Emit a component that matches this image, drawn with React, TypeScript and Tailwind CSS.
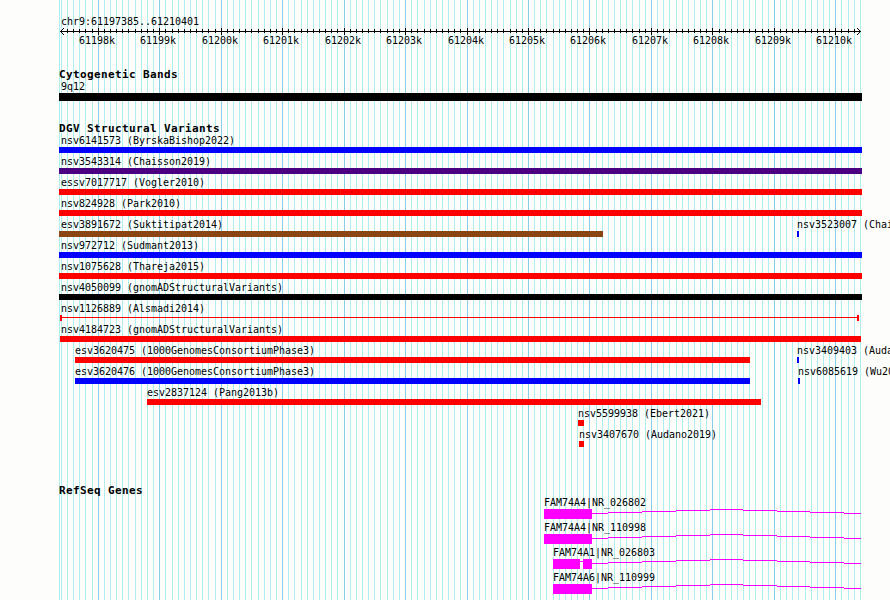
interface Feature {
  name: string;
  start: number;
  end: number;
  color: string;
  labelX?: number;
  thin?: boolean;
}

interface Gene {
  name: string;
  start: number;
  exons: [number, number][];
}

const BLUE = 'bg-[#0000ff]';
const RED = 'bg-[#ff0000]';
const PURPLE = 'bg-[#4b0082]';
const BROWN = 'bg-[#8b4513]';
const BLACK = 'bg-black';

// Pixel position of 61198k and the width of a 100 bp step
const ORIGIN = 98.25;
const STEP = 6.14628;

const gridLines = Array.from({ length: 131 }, (_, i) => {
  const k = i - 6;
  return { x: Math.floor(ORIGIN + k * STEP), major: k % 10 === 0, k };
});

const majorLines = gridLines.filter((line) => line.major);

const variantRows: Feature[][] = [
  [{ name: 'nsv6141573 (ByrskaBishop2022)', start: 59, end: 862, color: BLUE, labelX: 60 }],
  [{ name: 'nsv3543314 (Chaisson2019)', start: 59, end: 862, color: PURPLE, labelX: 60 }],
  [{ name: 'essv7017717 (Vogler2010)', start: 59, end: 862, color: RED, labelX: 60 }],
  [{ name: 'nsv824928 (Park2010)', start: 59, end: 862, color: RED, labelX: 60 }],
  [
    { name: 'esv3891672 (Suktitipat2014)', start: 59, end: 603, color: BROWN, labelX: 60 },
    { name: 'nsv3523007 (Chaisson2019)', start: 797, end: 799, color: BLUE, labelX: 796 },
  ],
  [{ name: 'nsv972712 (Sudmant2013)', start: 59, end: 862, color: BLUE, labelX: 60 }],
  [{ name: 'nsv1075628 (Thareja2015)', start: 59, end: 862, color: RED, labelX: 60 }],
  [{ name: 'nsv4050099 (gnomADStructuralVariants)', start: 59, end: 862, color: BLACK, labelX: 60 }],
  [{ name: 'nsv1126889 (Alsmadi2014)', start: 60, end: 859, color: RED, thin: true }],
  [{ name: 'nsv4184723 (gnomADStructuralVariants)', start: 60, end: 861, color: RED }],
  [
    { name: 'esv3620475 (1000GenomesConsortiumPhase3)', start: 75, end: 750, color: RED, labelX: 74 },
    { name: 'nsv3409403 (Audano2019)', start: 797, end: 799, color: BLUE, labelX: 796 },
  ],
  [
    { name: 'esv3620476 (1000GenomesConsortiumPhase3)', start: 75, end: 750, color: BLUE, labelX: 74 },
    { name: 'nsv6085619 (Wu2021)', start: 798, end: 800, color: BLUE, labelX: 797 },
  ],
  [{ name: 'esv2837124 (Pang2013b)', start: 147, end: 761, color: RED, labelX: 146 }],
  [{ name: 'nsv5599938 (Ebert2021)', start: 578, end: 584, color: RED, labelX: 577 }],
  [{ name: 'nsv3407670 (Audano2019)', start: 579, end: 584, color: RED, labelX: 578 }],
];

const genes: Gene[] = [
  { name: 'FAM74A4|NR_026802', start: 543, exons: [[544, 592]] },
  { name: 'FAM74A4|NR_110998', start: 543, exons: [[544, 592]] },
  { name: 'FAM74A1|NR_026803', start: 552, exons: [[553, 580], [583, 592]] },
  { name: 'FAM74A6|NR_110999', start: 552, exons: [[553, 592]] },
];

// Intron line, drawn as flat one pixel runs: [from, to, y]
const intron = [
  [592, 608, 4],
  [608, 642, 3],
  [642, 676, 2],
  [676, 710, 1],
  [710, 743, 0],
  [743, 777, 1],
  [777, 810, 2],
  [810, 844, 3],
  [844, 861, 4],
];

function Grid() {
  return (
    <svg className="absolute inset-0" width="890" height="600" shapeRendering="crispEdges">
      <rect x="59" y="0" width="1" height="600" fill="#afeeee" />
      {gridLines
        .filter((line) => line.x < 862)
        .map((line) => (
          <rect
            key={line.k}
            x={line.x}
            y="0"
            width="1"
            height="600"
            fill={line.major ? '#87ceeb' : '#afeeee'}
          />
        ))}
    </svg>
  );
}

function Ruler() {
  return (
    <div className="relative h-[40px]">
      <svg className="block" width="890" height="9" shapeRendering="crispEdges">
        <rect x="60" y="4" width="801" height="1" />
        {gridLines
          .filter((line) => line.x < 858 && line.x > 62)
          .map((line) => (
            <rect
              key={line.k}
              x={line.x}
              y={line.major ? 1 : 2}
              width="1"
              height={line.major ? 7 : 4}
            />
          ))}
        {[1, 2, 3].map((d) => (
          <g key={d}>
            <rect x={60 + d} y={4 - d} width="1" height="1" />
            <rect x={60 + d} y={4 + d} width="1" height="1" />
            <rect x={860 - d} y={4 - d} width="1" height="1" />
            <rect x={860 - d} y={4 + d} width="1" height="1" />
          </g>
        ))}
      </svg>
      {majorLines.map((line) => (
        <span key={line.k} className="absolute top-[7px]" style={{ left: line.x - 19 }}>
          {61198 + line.k / 10}k
        </span>
      ))}
    </div>
  );
}

function TrackTitle({ children }: { children: string }) {
  return (
    <h2 className="pl-[59px] pt-px h-[13px] leading-[13px] text-[11px] font-bold tracking-[0.378px]">
      {children}
    </h2>
  );
}

function VariantRow({ features }: { features: Feature[] }) {
  return (
    <div className="relative h-[21px]">
      {features.map((f) => (
        <div key={f.name}>
          <span className="absolute top-0 pl-px" style={{ left: f.labelX ?? f.start }}>
            {f.name}
          </span>
          {f.thin ? (
            <div
              className="absolute top-[13px] h-[6px] border-x-2 border-[#ff0000]"
              style={{ left: f.start, width: f.end - f.start }}
            >
              <div className="mt-[2px] h-px bg-[#ff0000]" />
            </div>
          ) : (
            <div
              className={`absolute top-[13px] h-[6px] ${f.color}`}
              style={{ left: f.start, width: f.end - f.start }}
            />
          )}
        </div>
      ))}
    </div>
  );
}

function GeneRow({ gene }: { gene: Gene }) {
  return (
    <div className="h-[25px]">
      <div className="h-[13px]" style={{ paddingLeft: gene.start + 1 }}>
        {gene.name}
      </div>
      <svg className="block" width="890" height="10" fill="#ff00ff" shapeRendering="crispEdges">
        {gene.exons.map(([from, to]) => (
          <rect key={from} x={from} y="0" width={to - from} height="10" />
        ))}
        {gene.exons.length > 1 && (
          <rect x={gene.exons[0][1]} y="2" width={gene.exons[1][0] - gene.exons[0][1]} height="1" />
        )}
        {intron.map(([from, to, y]) => (
          <rect key={from} x={from} y={y} width={to - from} height="1" />
        ))}
      </svg>
    </div>
  );
}

export default function App() {
  return (
    <div className="relative w-[890px] h-[600px] overflow-hidden bg-[#fdfefc] text-black whitespace-pre font-['DejaVu_Sans_Mono',monospace] text-[10px] leading-[13px] tracking-[-0.02px]">
      <Grid />
      <div className="relative flex flex-col">
        <div className="mt-[14px] h-[13px] pt-px pl-[61px]">chr9:61197385..61210401</div>
        <Ruler />
        <TrackTitle>Cytogenetic Bands</TrackTitle>
        <div className="h-[13px] pl-[61px]">9q12</div>
        <div className="ml-[59px] w-[803px] h-[8px] bg-black" />
        <div className="h-[20px]" />
        <TrackTitle>DGV Structural Variants</TrackTitle>
        {variantRows.map((features) => (
          <VariantRow key={features[0].name} features={features} />
        ))}
        <div className="h-[34px]" />
        <TrackTitle>RefSeq Genes</TrackTitle>
        {genes.map((gene) => (
          <GeneRow key={gene.name} gene={gene} />
        ))}
      </div>
    </div>
  );
}
